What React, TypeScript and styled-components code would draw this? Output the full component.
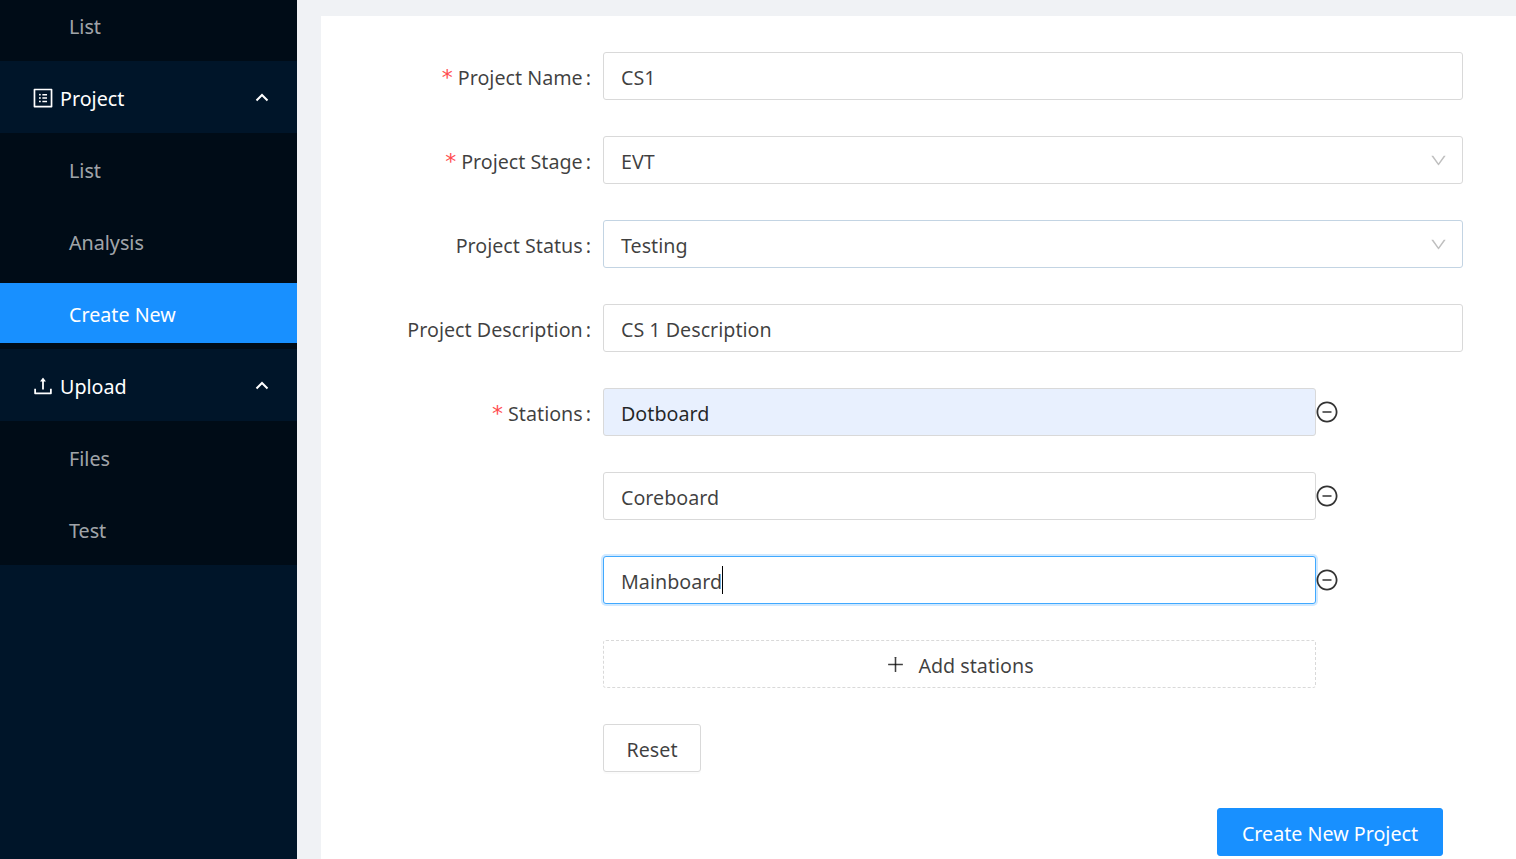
import React from "react";
import styled, { createGlobalStyle } from "styled-components";
import { AiOutlineProfile, AiOutlineUpload, AiOutlineDown, AiOutlineMinusCircle, AiOutlinePlus } from "react-icons/ai";

const Global = createGlobalStyle`
  html, body { margin: 0; padding: 0; height: 100%; overflow: hidden; background: #f0f2f5; }
  body { font-family: "Noto Sans", "Open Sans", "Liberation Sans", sans-serif; font-size: 19.7px; }
`;
const Page = styled.div`display: flex; height: 859px; overflow: hidden;`;
const Sidebar = styled.aside`width: 297px; flex: none; background: #001529; display: flex; flex-direction: column;`;
const SubMenu = styled.div<{ $pad: string }>`
  background: #000c17;
  display: flex; flex-direction: column; gap: 12px;
  padding: ${(p) => p.$pad};
`;
const SubItem = styled.div<{ $active?: boolean; $short?: boolean }>`
  box-sizing: border-box;
  height: ${(p) => (p.$short ? 52 : 60)}px;
  padding: ${(p) => (p.$short ? "0" : "2px")} 0 0 69px;
  display: flex; align-items: center;
  color: ${(p) => (p.$active ? "#fff" : "rgba(255,255,255,.65)")};
  background: ${(p) => (p.$active ? "#1890ff" : "transparent")};
`;
const GroupHeader = styled.div`
  box-sizing: border-box;
  height: 72px;
  padding: 2px 27px 0 31px;
  display: flex; align-items: center; gap: 5px;
  color: #fff;
  svg.lead { font-size: 24px; flex: none; margin-top: -1px; }
`;
const GroupTitle = styled.span`flex: 1;`;
const Main = styled.main`flex: 1; padding: 16px 0 0 24px; min-width: 0;`;
const Card = styled.div`background: #fff; height: 900px; padding: 36px 53px 0 0; display: flex; flex-direction: column; gap: 36px;`;
const Row = styled.div`display: grid; grid-template-columns: 282px 1fr; align-items: start;`;
const Label = styled.label`
  height: 48px; padding-right: 12px; padding-top: 2px; box-sizing: border-box;
  display: flex; align-items: center; justify-content: flex-end;
  color: rgba(0,0,0,.75); white-space: nowrap;
`;
const Star = styled.span`color: #ff4d4f; margin-right: 5px; font-family: "DejaVu Sans", sans-serif; font-size: 22px;`;
const Colon = styled.span`margin-left: 3px;`;
const Field = styled.div<{ $filled?: boolean; $focused?: boolean; $narrow?: boolean; $tint?: boolean }>`
  box-sizing: border-box;
  height: 48px;
  width: ${(p) => (p.$narrow ? "713px" : "100%")};
  padding: 3px 17px 0;
  display: flex; align-items: center; justify-content: space-between;
  border: 1px solid ${(p) => (p.$focused ? "#40a9ff" : p.$tint ? "#c3d4e3" : "#d9d9d9")};
  border-radius: 3px;
  background: ${(p) => (p.$filled ? "#e8f0fe" : "#fff")};
  color: ${(p) => (p.$filled ? "rgba(0,0,0,.85)" : "rgba(0,0,0,.75)")};
  box-shadow: ${(p) => (p.$focused ? "0 0 0 2px rgba(24,144,255,.2)" : "none")};
  svg { color: #bfbfbf; font-size: 19px; margin-right: -3px; margin-top: -3px; }
`;
const Value = styled.span`display: inline-flex; align-items: center;`;
const Caret = styled.span`display: inline-block; width: 1px; height: 28px; background: #000; margin-top: -3px;`;
const DynamicLine = styled.div`display: flex; align-items: center;`;
const Remove = styled.span`
  display: flex; margin-left: -1px; font-size: 24px; color: rgba(0,0,0,.8); margin-top: -1px;
`;
const AddButton = styled.div`
  box-sizing: border-box; width: 713px; height: 48px;
  border: 1px dashed #d9d9d9; border-radius: 3px;
  display: flex; align-items: center; justify-content: center; gap: 12px;
  color: rgba(0,0,0,.75); padding-top: 2px;
  svg { font-size: 21px; margin-top: -2px; }
`;
const Button = styled.button`
  box-sizing: border-box; width: 98px; height: 48px; padding: 2px 0 0;
  border: 1px solid #d9d9d9; border-radius: 3px; background: #fff;
  font: inherit; color: rgba(0,0,0,.75);
  box-shadow: 0 2px 0 rgba(0,0,0,.015);
`;
const Footer = styled.div`display: flex; justify-content: flex-end; padding-right: 20px;`;
const Primary = styled.button`
  box-sizing: border-box; width: 226px; height: 48px; padding: 2px 0 0;
  border: 1px solid #1890ff; border-radius: 3px; background: #1890ff;
  font: inherit; color: #fff; white-space: nowrap;
`;

const Chevron = () => (
  <svg width="16" height="10" viewBox="0 0 16 10" fill="none" stroke="#fff" strokeWidth="2" style={{ flex: "none", marginTop: -2 }}>
    <path d="M2.5 8.5 L8 3 L13.5 8.5" />
  </svg>
);

const FormRow = ({ label, required, children }: { label?: string; required?: boolean; children: React.ReactNode }) => (
  <Row>
    {label ? (
      <Label>
        {required && <Star>*</Star>}
        {label}
        <Colon>:</Colon>
      </Label>
    ) : (
      <span />
    )}
    <div>{children}</div>
  </Row>
);

const StationLine = ({ children, ...rest }: { children: React.ReactNode; $filled?: boolean; $focused?: boolean }) => (
  <DynamicLine>
    <Field $narrow {...rest}>
      <Value>{children}</Value>
    </Field>
    <Remove>
      <AiOutlineMinusCircle />
    </Remove>
  </DynamicLine>
);

export default function App() {
  return (
    <Page>
      <Global />
      <Sidebar>
        <SubMenu $pad="0 0 9px">
          <SubItem $short>List</SubItem>
        </SubMenu>
        <GroupHeader>
          <AiOutlineProfile className="lead" />
          <GroupTitle>Project</GroupTitle>
          <Chevron />
        </GroupHeader>
        <SubMenu $pad="6px 0">
          <SubItem>List</SubItem>
          <SubItem>Analysis</SubItem>
          <SubItem $active>Create New</SubItem>
        </SubMenu>
        <GroupHeader>
          <AiOutlineUpload className="lead" />
          <GroupTitle>Upload</GroupTitle>
          <Chevron />
        </GroupHeader>
        <SubMenu $pad="6px 0">
          <SubItem>Files</SubItem>
          <SubItem>Test</SubItem>
        </SubMenu>
      </Sidebar>
      <Main>
        <Card>
          <FormRow label="Project Name" required>
            <Field><Value>CS1</Value></Field>
          </FormRow>
          <FormRow label="Project Stage" required>
            <Field><Value>EVT</Value><AiOutlineDown /></Field>
          </FormRow>
          <FormRow label="Project Status">
            <Field $tint><Value>Testing</Value><AiOutlineDown /></Field>
          </FormRow>
          <FormRow label="Project Description">
            <Field><Value>CS 1 Description</Value></Field>
          </FormRow>
          <FormRow label="Stations" required>
            <StationLine $filled>Dotboard</StationLine>
          </FormRow>
          <FormRow>
            <StationLine>Coreboard</StationLine>
          </FormRow>
          <FormRow>
            <StationLine $focused>Mainboard<Caret /></StationLine>
          </FormRow>
          <FormRow>
            <AddButton><AiOutlinePlus />Add stations</AddButton>
          </FormRow>
          <FormRow>
            <Button>Reset</Button>
          </FormRow>
          <Footer>
            <Primary>Create New Project</Primary>
          </Footer>
        </Card>
      </Main>
    </Page>
  );
}
